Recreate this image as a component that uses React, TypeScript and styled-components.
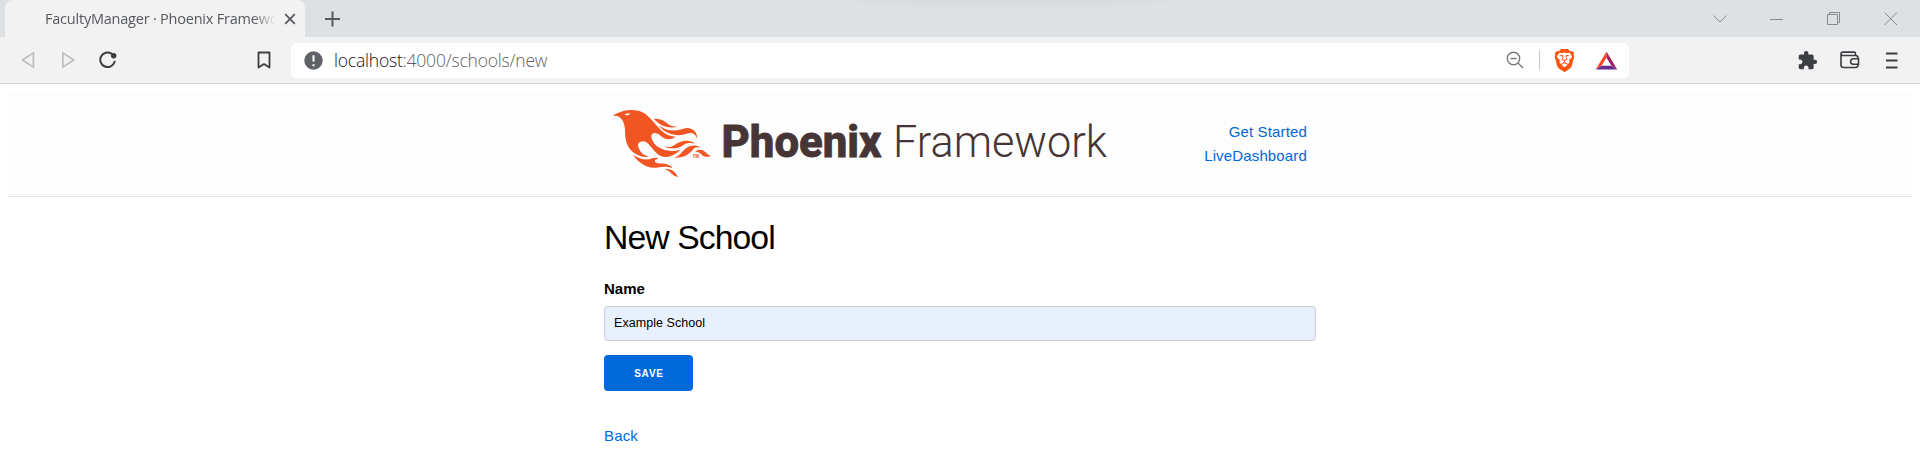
import React from 'react';
import styled, { createGlobalStyle } from 'styled-components';
import { SiBrave } from 'react-icons/si';
import { MdExtension } from 'react-icons/md';

const GlobalStyle = createGlobalStyle`
  *, *::before, *::after { box-sizing: border-box; }
  body { margin: 0; background: #fff; font-family: "Liberation Sans", Arial, sans-serif; }
  svg { display: block; flex: none; }
`;

const Browser = styled.div`
  display: flex;
  flex-direction: column;
  height: 467px;
  overflow: hidden;
`;

const TabStrip = styled.div`
  display: flex;
  align-items: stretch;
  height: 37px;
  padding-left: 5px;
  background: radial-gradient(ellipse 190px 10px at 1010px 0, #d5dadc 0%, #d8dcdf 50%, #dde1e4 100%);
`;

const Tab = styled.div`
  display: flex;
  align-items: center;
  width: 300px;
  padding-left: 40px;
  border-radius: 8px 8px 0 0;
  background: #f2f2f2;
`;

const TabTitle = styled.div`
  width: 230px;
  overflow: hidden;
  white-space: nowrap;
  font: 14.5px/22px "Open Sans", "Noto Sans", sans-serif;
  letter-spacing: -0.22px;
  color: #55595e;
  mask-image: linear-gradient(to right, #000 208px, transparent 231px);
`;

const IconSlot = styled.div<{ $left?: number; $color?: string }>`
  display: flex;
  align-items: center;
  margin-left: ${(p) => p.$left ?? 0}px;
  color: ${(p) => p.$color ?? '#3b3e42'};
`;

const WindowControls = styled.div`
  display: flex;
  align-items: center;
  gap: 43px;
  margin-left: auto;
  padding-right: 22px;
  color: #888b8e;
`;

const Toolbar = styled.div`
  display: flex;
  align-items: center;
  height: 47px;
  border-bottom: 1px solid #d5d7d8;
  background: #f2f2f2;
`;

const AddressBar = styled.div`
  display: flex;
  align-items: center;
  width: 1338px;
  height: 35px;
  margin-left: 20px;
  padding: 0 11px 0 13px;
  border-radius: 5px;
  background: #fff;
`;

const Url = styled.div`
  flex: 1;
  margin-left: 11px;
  font: 300 17.5px/24px "Open Sans", "Noto Sans", sans-serif;
  letter-spacing: -0.2px;
  color: #5d6165;
  b { font-weight: 300; color: #101114; }
`;

const Divider = styled.div`
  width: 1px;
  height: 20px;
  margin-left: 15px;
  background: #c6c8ca;
`;

const Page = styled.div`
  flex: 1;
  padding: 8px 8px 0;
`;

const Header = styled.header`
  display: flex;
  justify-content: center;
  height: 105px;
  border-bottom: 1px solid #e6e6e6;
  background: #fdfdfd;
`;

const HeaderInner = styled.div`
  display: flex;
  justify-content: space-between;
  width: 712px;
  padding: 0 9px;
`;

const Logo = styled.a`
  display: block;
  margin-top: 10px;
`;

const Nav = styled.nav`
  display: flex;
  flex-direction: column;
  align-items: flex-end;
  margin-top: 28px;
`;

const Link = styled.a`
  font-size: 15px;
  line-height: 24px;
  letter-spacing: 0.15px;
  color: #0069d9;
  text-decoration: none;
`;

const Main = styled.main`
  display: flex;
  flex-direction: column;
  align-items: flex-start;
  width: 712px;
  margin: 19px auto 0;
`;

const Title = styled.h1`
  margin: 0;
  font-size: 33.75px;
  line-height: 42px;
  font-weight: 400;
  letter-spacing: -0.94px;
  color: #000;
`;

const Label = styled.label`
  margin-top: 19px;
  font-size: 15px;
  line-height: 24px;
  font-weight: 700;
  color: #000;
`;

const TextField = styled.input`
  width: 712px;
  height: 35px;
  margin-top: 5px;
  padding: 0 9px 2px;
  border: 1px solid #cfcfcf;
  border-radius: 4px;
  background: #e8f0fe;
  font: 12.5px "Liberation Sans", Arial, sans-serif;
  letter-spacing: 0.05px;
  color: #000;
  outline: 0;
`;

const SaveButton = styled.button`
  width: 89px;
  height: 36px;
  margin-top: 14px;
  padding: 1px 0 0 1px;
  border: 0;
  border-radius: 4px;
  background: #0069d9;
  font: 700 10px/35px "Liberation Sans", Arial, sans-serif;
  letter-spacing: 0.8px;
  color: #fff;
`;

const BackRow = styled.div`
  margin-top: 33px;
`;

const BIRD =
  'm26.371 33.477-.552-.1c-3.92-.729-6.397-3.1-7.57-6.829-.733-2.324.597-4.035 3.035-4.148 1.995-.092 3.362 1.055 4.57 2.39 1.557 1.72 2.984 3.558 4.514 5.305 2.202 2.515 4.797 4.134 8.447 3.634 3.183-.436 5.958-1.728 8.371-3.828.363-.316.761-.592 1.144-.886l-.241-.284c-2.027.63-4.093.841-6.205.735-3.195-.16-6.24-.828-8.964-2.582-2.486-1.601-4.319-3.746-5.19-6.611-.704-2.315.736-3.934 3.135-3.6.948.133 1.746.56 2.463 1.165.583.493 1.143 1.015 1.738 1.493 2.8 2.25 6.712 2.375 10.265-.068-5.842-.026-9.817-3.24-13.308-7.313-1.366-1.594-2.7-3.216-4.095-4.785-2.698-3.036-5.692-5.71-9.79-6.623C12.8-.623 7.745.14 2.893 2.361 1.926 2.804.997 3.319 0 4.149c.494 0 .763.006 1.032 0 2.446-.064 4.28 1.023 5.602 3.024.962 1.457 1.415 3.104 1.761 4.798.513 2.515.247 5.078.544 7.605.761 6.494 4.08 11.026 10.26 13.346 2.267.852 4.591 1.135 7.172.555ZM10.751 3.852c-.976.246-1.756-.148-2.56-.962 1.377-.343 2.592-.476 3.897-.528-.107.848-.607 1.306-1.336 1.49Zm32.002 37.924c-.085-.626-.62-.901-1.04-1.228-1.857-1.446-4.03-1.958-6.333-2-1.375-.026-2.735-.128-4.031-.61-.595-.22-1.26-.505-1.244-1.272.015-.78.693-1 1.31-1.184.505-.15 1.026-.247 1.6-.382-1.46-.936-2.886-1.065-4.787-.3-2.993 1.202-5.943 1.06-8.926-.017-1.684-.608-3.179-1.563-4.735-2.408l-.077.057c1.29 2.115 3.034 3.817 5.004 5.271 3.793 2.8 7.936 4.471 12.784 3.73A66.714 66.714 0 0 1 37 40.877c1.98-.16 3.866.398 5.753.899Zm-9.14-30.345c-.105-.076-.206-.266-.42-.069 1.745 2.36 3.985 4.098 6.683 5.193 4.354 1.767 8.773 2.07 13.293.51 3.51-1.21 6.033-.028 7.343 3.38.19-3.955-2.137-6.837-5.843-7.401-2.084-.318-4.01.373-5.962.94-5.434 1.575-10.485.798-15.094-2.553Zm27.085 15.425c.708.059 1.416.123 2.124.185-1.6-1.405-3.55-1.517-5.523-1.404-3.003.17-5.167 1.903-7.14 3.972-1.739 1.824-3.31 3.87-5.903 4.604.043.078.054.117.066.117.35.005.699.021 1.047.005 3.768-.17 7.317-.965 10.14-3.7.89-.86 1.685-1.817 2.544-2.71.716-.746 1.584-1.159 2.645-1.07Zm-8.753-4.67c-2.812.246-5.254 1.409-7.548 2.943-1.766 1.18-3.654 1.738-5.776 1.37-.374-.066-.75-.114-1.124-.17l-.013.156c.135.07.265.151.405.207.354.14.702.308 1.07.395 4.083.971 7.992.474 11.516-1.803 2.221-1.435 4.521-1.707 7.013-1.336.252.038.503.083.756.107.234.022.479.255.795.003-2.179-1.574-4.526-2.096-7.094-1.872Zm-10.049-9.544c1.475.051 2.943-.142 4.486-1.059-.452.04-.643.04-.827.076-2.126.424-4.033-.04-5.733-1.383-.623-.493-1.257-.974-1.889-1.457-2.503-1.914-5.374-2.555-8.514-2.5.05.154.054.26.108.315 3.417 3.455 7.371 5.836 12.369 6.008Zm24.727 17.731c-2.114-2.097-4.952-2.367-7.578-.537 1.738.078 3.043.632 4.101 1.728a13 13 0 0 0 1.182 1.106c1.6 1.29 4.311 1.352 5.896.155-1.861-.726-1.861-.726-3.601-2.452Zm-21.058 16.06c-1.858-3.46-4.981-4.24-8.59-4.008a9.667 9.667 0 0 1 2.977 1.39c.84.586 1.547 1.311 2.243 2.055 1.38 1.473 3.534 2.376 4.962 2.07-.656-.412-1.238-.848-1.592-1.507Z';

const PhoenixLogo = () => (
  <svg width="498" height="80" viewBox="0 0 498 80">
    <path d={BIRD} transform="translate(0 8) scale(1.39)" fill="#f15524" />
    <text x="79.5" y="55.5" fontFamily="Liberation Sans" fontWeight="700" fontSize="4.5" fill="#f15524">TM</text>
    <text x="108.5" y="55" fontFamily="Roboto, sans-serif" fontWeight="800" fontSize="44.5" textLength="160" lengthAdjust="spacingAndGlyphs" fill="#463535" stroke="#463535" strokeWidth="0.8">Phoenix</text>
    <text x="280" y="55" fontFamily="Roboto, sans-serif" fontWeight="300" fontSize="44.5" textLength="214" lengthAdjust="spacingAndGlyphs" fill="#463535">Framework</text>
  </svg>
);

const stroke = { fill: 'none', stroke: 'currentColor' } as const;

export default function App() {
  return (
    <Browser>
      <GlobalStyle />
      <TabStrip>
        <Tab>
          <TabTitle>FacultyManager · Phoenix Framework</TabTitle>
          <IconSlot $left={9} $color="#56595d">
            <svg width="12" height="12" {...stroke} strokeWidth="1.8"><path d="M1.2 1.2l9.6 9.6M10.8 1.2l-9.6 9.6" /></svg>
          </IconSlot>
        </Tab>
        <IconSlot $left={20} $color="#56595d">
          <svg width="16" height="16" {...stroke} strokeWidth="2"><path d="M7.5 .5v15M0 8h15" /></svg>
        </IconSlot>
        <WindowControls>
          <svg width="14" height="8" {...stroke}><path d="M.5 .5l6.5 6.5l6.5-6.5" /></svg>
          <svg width="14" height="2" {...stroke}><path d="M0 1.5h13" /></svg>
          <svg width="14" height="14" {...stroke}><path d="M.5 2.5h10v10h-10zM2.5 2.5v-2h10v10h-2" /></svg>
          <svg width="14" height="14" {...stroke}><path d="M.5 .5l12.5 12.5M13 .5l-12.5 12.5" /></svg>
        </WindowControls>
      </TabStrip>

      <Toolbar>
        <IconSlot $left={21} $color="#b9bbbd">
          <svg width="14" height="18" {...stroke} strokeWidth="1.6" strokeLinejoin="round"><path d="M12.4 1.8v14.4l-11-7.2z" /></svg>
        </IconSlot>
        <IconSlot $left={26} $color="#b9bbbd">
          <svg width="14" height="18" {...stroke} strokeWidth="1.6" strokeLinejoin="round"><path d="M1.8 1.8v14.4l11-7.2z" /></svg>
        </IconSlot>
        <IconSlot $left={24}>
          <svg width="18" height="18" {...stroke} strokeWidth="2" strokeLinecap="round">
            <path d="M12.5 2.6A7.3 7.3 0 1 0 15.6 10.8" />
            <circle cx="14.7" cy="4.7" r="2.7" fill="currentColor" stroke="none" />
          </svg>
        </IconSlot>
        <IconSlot $left={140}>
          <svg width="14" height="18" {...stroke} strokeWidth="1.8" strokeLinejoin="round"><path d="M1.5 1.5h11v15l-5.5-3.4l-5.5 3.4z" /></svg>
        </IconSlot>
        <AddressBar>
          <svg width="19" height="19">
            <circle cx="9.5" cy="9.5" r="9.2" fill="#5f6368" />
            <path d="M9.5 4.2v6.4M9.5 13.2v2" stroke="#fff" strokeWidth="2" />
          </svg>
          <Url><b>localhost</b>:4000/schools/new</Url>
          <IconSlot $color="#77797c">
            <svg width="18" height="18" {...stroke} strokeWidth="1.4"><circle cx="7.5" cy="7.5" r="6.2" /><path d="M12 12l5 5M4.5 7.5h6" /></svg>
          </IconSlot>
          <Divider />
          <IconSlot $left={13} $color="#fb5412"><SiBrave size={23} /></IconSlot>
          <IconSlot $left={19}>
            <svg width="23" height="21" viewBox="0 0 24 21">
              <path d="M12 1L.8 20l6-4L12 7.500z" fill="#ff4724" />
              <path d="M12 1l11.200 19-6-4L12 7.500z" fill="#9e1f63" />
              <path d="M.8 20h22.400l-6-4H6.800z" fill="#662d91" />
            </svg>
          </IconSlot>
        </AddressBar>
        <IconSlot $left={168}><MdExtension size={21} /></IconSlot>
        <IconSlot $left={22}>
          <svg width="20" height="18" {...stroke} strokeWidth="1.6">
            <path d="M1 3.5v10.500q0 2.500 2.500 2.500h12q2.500 0 2.500-2.500v-7q0-2.500-2.500-2.500h-12.500q-2 0-2-1.700t2-1.700h11q1.500 0 1.500 1.500v1.500" />
            <path d="M18.500 7.800h-5.200a2.700 2.700 0 0 0 0 5.400h5.200z" fill="#f2f2f2" />
          </svg>
        </IconSlot>
        <IconSlot $left={26}>
          <svg width="12" height="17" {...stroke} strokeWidth="1.800"><path d="M0 1.500h11.500M0 8.500h11.500M0 15.500h11.500" /></svg>
        </IconSlot>
      </Toolbar>

      <Page>
        <Header>
          <HeaderInner>
            <Logo><PhoenixLogo /></Logo>
            <Nav>
              <Link>Get Started</Link>
              <Link>LiveDashboard</Link>
            </Nav>
          </HeaderInner>
        </Header>
        <Main>
          <Title>New School</Title>
          <Label htmlFor="name">Name</Label>
          <TextField id="name" defaultValue="Example School" />
          <SaveButton>SAVE</SaveButton>
          <BackRow><Link>Back</Link></BackRow>
        </Main>
      </Page>
    </Browser>
  );
}
